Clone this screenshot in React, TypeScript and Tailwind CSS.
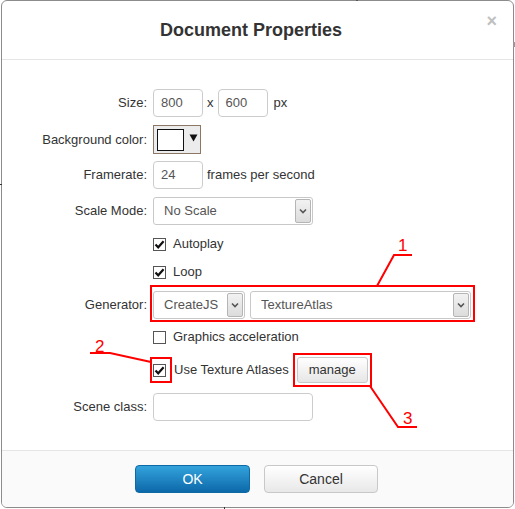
import React from "react";

const font = { fontFamily: '"Liberation Sans", Arial, sans-serif' };

function Check({ checked }: { checked: boolean }) {
  return (
    <span className="w-[13px] h-[13px] border border-[#555] bg-white flex items-center justify-center shrink-0">
      {checked && (
        <svg width="11" height="11" viewBox="0 0 11 11">
          <path d="M1.5 5.5 L4.2 8.3 L9.6 2.3" fill="none" stroke="#111" strokeWidth="2.2" />
        </svg>
      )}
    </span>
  );
}

function Arrow() {
  return (
    <span className="w-[16px] self-stretch my-[1px] mr-[1px] border border-[#b5b5b5] rounded-[2px] bg-gradient-to-b from-[#f2f2f2] to-[#dcdcdc] flex items-center justify-center">
      <svg width="8" height="6" viewBox="0 0 8 6">
        <path d="M1 1.5 L4 4.5 L7 1.5" fill="none" stroke="#555" strokeWidth="1.6" />
      </svg>
    </span>
  );
}

function Select({ w, text }: { w: string; text: string }) {
  return (
    <div className={`${w} h-[28px] border border-[#c8c8c8] rounded-[3px] bg-white flex items-stretch`}>
      <span className="flex-1 flex items-center pl-[10px] text-[#555]">{text}</span>
      <Arrow />
    </div>
  );
}

function Label({ children }: { children?: React.ReactNode }) {
  return <div className="w-[145px] text-right pr-[0px] shrink-0 text-[#333]">{children}</div>;
}

export default function App() {
  return (
    <div className="relative w-[515px] h-[509px] bg-white text-[13px]" style={font}>
      {/* stray background marks */}
      <div className="absolute left-0 top-[184px] w-[2px] h-[1px] bg-[#333]" />
      <div className="absolute left-[356px] top-0 w-[2px] h-[1px] bg-[#555]" />
      <div className="absolute right-0 top-[42px] w-[2px] h-[5px] bg-[#999]" />
      <div className="absolute left-[224px] bottom-0 w-[1px] h-[2px] bg-[#333]" />

      <div className="ml-[1px] w-[513px] h-[508px] border border-[#8c8c8c] rounded-[6px] bg-white flex flex-col overflow-hidden">
        {/* header */}
        <div className="relative h-[59px] border-b border-[#e5e5e5] flex items-center justify-center pr-[13px] shrink-0">
          <span className="text-[18px] font-bold text-[#333]">Document Properties</span>
          <span className="absolute right-[16px] top-[11px] text-[18px] font-bold text-[#c0c0c0] leading-none">×</span>
        </div>

        {/* body */}
        <div className="flex-1 flex flex-col pt-[29px]">
          <div className="flex items-center h-[28px]">
            <Label>Size:</Label>
            <div className="ml-[6px] flex items-center">
              <div className="w-[50px] h-[28px] border border-[#ccc] rounded-[4px] flex items-center pl-[7px] text-[#555]">800</div>
              <span className="mx-[4px] text-[#333]">x</span>
              <div className="w-[50px] h-[28px] border border-[#ccc] rounded-[4px] flex items-center pl-[7px] text-[#555]">600</div>
              <span className="ml-[6px] text-[#333]">px</span>
            </div>
          </div>

          <div className="flex items-center h-[29px] mt-[8px]">
            <Label>Background color:</Label>
            <div className="ml-[6px] w-[48px] h-[29px] border border-[#8b7763] bg-[#ececec] flex items-center pl-[3px]">
              <span className="w-[27px] h-[22px] border border-[#111] bg-white" />
              <svg className="ml-[5px] mb-[4px]" width="9" height="8" viewBox="0 0 9 8">
                <path d="M0.5 0.5 L8.5 0.5 L4.5 7.5 Z" fill="#111" />
              </svg>
            </div>
          </div>

          <div className="flex items-center h-[28px] mt-[7px]">
            <Label>Framerate:</Label>
            <div className="ml-[6px] flex items-center">
              <div className="w-[50px] h-[28px] border border-[#ccc] rounded-[4px] flex items-center pl-[7px] text-[#555]">24</div>
              <span className="ml-[4px] text-[#333]">frames per second</span>
            </div>
          </div>

          <div className="flex items-center h-[28px] mt-[8px]">
            <Label>Scale Mode:</Label>
            <div className="ml-[6px]">
              <Select w="w-[160px]" text="No Scale" />
            </div>
          </div>

          <div className="flex items-center h-[20px] mt-[9px]">
            <Label />
            <div className="ml-[6px] flex items-center">
              <Check checked />
              <span className="ml-[7px] text-[#333]">Autoplay</span>
            </div>
          </div>

          <div className="flex items-center h-[20px] mt-[8px]">
            <Label />
            <div className="ml-[6px] flex items-center">
              <Check checked />
              <span className="ml-[7px] text-[#333]">Loop</span>
            </div>
          </div>

          <div className="flex items-center h-[29px] mt-[8px]">
            <Label>Generator:</Label>
            <div className="ml-[6px] flex items-center gap-[5px]">
              <Select w="w-[92px]" text="CreateJS" />
              <Select w="w-[221px]" text="TextureAtlas" />
            </div>
          </div>

          <div className="flex items-center h-[20px] mt-[8px]">
            <Label />
            <div className="ml-[6px] flex items-center">
              <Check checked={false} />
              <span className="ml-[7px] text-[#333]">Graphics acceleration</span>
            </div>
          </div>

          <div className="flex items-center h-[26px] mt-[10px]">
            <Label />
            <div className="ml-[6px] flex items-center">
              <Check checked />
              <span className="ml-[8px] text-[#333]">Use Texture Atlases</span>
              <span className="ml-[8px] w-[71px] h-[26px] border border-[#c8c8c8] rounded-[3px] bg-gradient-to-b from-[#ffffff] to-[#e6e6e6] flex items-center justify-center text-[#333]">
                manage
              </span>
            </div>
          </div>

          <div className="flex items-center h-[28px] mt-[10px]">
            <Label>Scene class:</Label>
            <div className="ml-[6px] w-[160px] h-[28px] border border-[#ccc] rounded-[4px]" />
          </div>
        </div>

        {/* footer */}
        <div className="h-[57px] border-t border-[#e5e5e5] bg-[#fafafa] flex items-start pt-[14px] pl-[133px] gap-[14px] shrink-0">
          <span className="w-[115px] h-[28px] rounded-[4px] border border-[#0d6aa3] bg-gradient-to-b from-[#33a3dc] to-[#0c69a9] text-white flex items-center justify-center text-[14px]">
            OK
          </span>
          <span className="w-[114px] h-[28px] rounded-[4px] border border-[#c8c8c8] bg-gradient-to-b from-[#ffffff] to-[#e8e8e8] text-[#333] flex items-center justify-center text-[14px]">
            Cancel
          </span>
        </div>
      </div>

      {/* annotations */}
      <svg className="absolute inset-0 pointer-events-none" width="515" height="509" viewBox="0 0 515 509">
        <g fill="none" stroke="#ff0000" strokeWidth="2">
          <rect x="151" y="286" width="323" height="35" />
          <path d="M377 286 L394 255 L412 255" />
          <rect x="151" y="358" width="20" height="24" />
          <path d="M151 362 L110 353 L90 353" />
          <rect x="294" y="354" width="77" height="32" />
          <path d="M370 386 L398 427 L417 427" />
        </g>
      </svg>
      <span className="absolute left-[398px] top-[237px] text-[17px] leading-none text-[#ff0000]">1</span>
      <span className="absolute left-[95px] top-[338px] text-[17px] leading-none text-[#ff0000]">2</span>
      <span className="absolute left-[403px] top-[410px] text-[17px] leading-none text-[#ff0000]">3</span>
    </div>
  );
}
